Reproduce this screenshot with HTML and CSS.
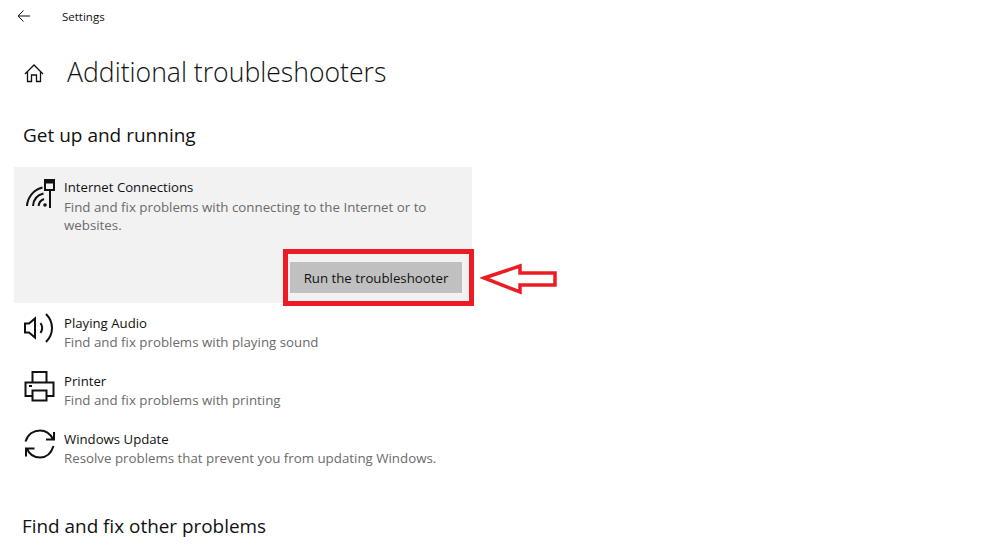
FILE: index.html
```html
<!DOCTYPE html>
<html lang="en">

<head>
    <meta charset="UTF-8">
    <title>Settings</title>
    <link rel="stylesheet" href="styles.css">
</head>

<body>
    <div class="titlebar">
        <svg class="back-icon" width="16" height="16" viewBox="0 0 16 16"><path d="M13 8H1.500M6.500 2.500 1 8l5.500 5.500" /></svg>
        <span class="app-name">Settings</span>
    </div>

    <div class="page-head">
        <svg class="home-icon" width="22" height="22" viewBox="0 0 22 22"><path d="M2 13 11 4l9 9M4.500 11V20.500H8.500V14h5v6.500h4V11" /></svg>
        <h1>Additional troubleshooters</h1>
    </div>

    <h2>Get up and running</h2>

    <div class="list">
        <div class="item selected">
            <div class="item-row">
                <svg class="item-icon" width="32" height="32" viewBox="0 0 32 32"><path d="M3 29C3.500 20 10 12.500 18.500 10.500M9 29C9.500 22 13 18 19.500 16.500M14.500 29c.5-3.500 2.500-6 5.500-7" /><circle cx="21" cy="28" r="1.800" class="dot" /><path d="M26 13V31M21 3h9v10h-9z" /><rect class="dot" x="21" y="3" width="9" height="3.500" /></svg>
                <div class="item-text">
                    <div class="item-title">Internet Connections</div>
                    <div class="item-desc">Find and fix problems with connecting to the Internet or to websites.</div>
                </div>
            </div>
            <div class="item-actions">
                <button class="run-btn">Run the troubleshooter</button>
            </div>
        </div>

        <div class="item">
            <div class="item-row">
                <svg class="item-icon" width="32" height="32" viewBox="0 0 32 32"><path d="M1 10.500h4l6-5v19l-6-5H1zM16.500 10c2 3 2 7 0 10M22 1c8 8 8 20 0 28" /></svg>
                <div class="item-text">
                    <div class="item-title">Playing Audio</div>
                    <div class="item-desc">Find and fix problems with playing sound</div>
                </div>
            </div>
        </div>

        <div class="item">
            <div class="item-row">
                <svg class="item-icon" width="32" height="32" viewBox="0 0 32 32"><path d="M8.500 11V1h14v10M8 25H1.500V11.500h28V25H23M8.500 19.500h14v10h-14zM5 15h3" /></svg>
                <div class="item-text">
                    <div class="item-title">Printer</div>
                    <div class="item-desc">Find and fix problems with printing</div>
                </div>
            </div>
        </div>

        <div class="item">
            <div class="item-row">
                <svg class="item-icon" width="32" height="32" viewBox="0 0 32 32"><path d="M1.500 12.500C4 5 10 1.500 16 1.500c5.500 0 10 3 13 8.500M30 3v7.500h-8M29.500 17C27 25 22 28.500 16 28.500c-5.500 0-10.500-3-13-8.500M2 27.500V19.500h8.500" /></svg>
                <div class="item-text">
                    <div class="item-title">Windows Update</div>
                    <div class="item-desc">Resolve problems that prevent you from updating Windows.</div>
                </div>
            </div>
        </div>
    </div>

    <h2 class="other">Find and fix other problems</h2>

    <!-- annotation drawn on top of the screenshot -->
    <div class="mark-box"></div>
    <svg class="mark-arrow" width="80" height="34" viewBox="0 0 80 34"><path d="M4 16 40 4v7h35v12H40v7z" /></svg>
</body>

</html>
```

FILE: styles.css
```css
html,
body {
    height: 100%;
}

body {
    margin: 0;
    position: relative;
    overflow: hidden;
    background-color: white;
    color: #111;
    font-family: "Open Sans", sans-serif;
}

svg path {
    fill: none;
    stroke: #111;
    stroke-width: 1.3;
}

.back-icon path {
    stroke-width: 1;
}

.titlebar {
    display: flex;
    align-items: center;
    height: 32px;
    padding-left: 17px;
}

.app-name {
    margin-left: 29px;
    font-size: 11.5px;
}

.page-head {
    display: flex;
    align-items: center;
    height: 38px;
    margin-top: 21px;
    padding-left: 23px;
}

h1 {
    margin: 0 0 0 22px;
    font-size: 26.6px;
    font-weight: 300;
}

h2 {
    margin: 29px 0 0 23px;
    height: 30px;
    font-size: 19px;
    font-weight: 400;
    line-height: 30px;
}

.list {
    margin-top: 17px;
    width: 458px;
    margin-left: 14px;
}

.item {
    height: 58px;
    padding: 0 10px;
}

.item-row {
    display: flex;
}

.item-icon {
    flex: none;
    margin-top: 10px;
    margin-right: 8px;
}

.item-icon path {
    stroke-width: 2;
}

.item .dot {
    fill: #111;
}

.item-text {
    padding-top: 11px;
}

.item-title {
    font-size: 13.2px;
    line-height: 18px;
}

.item-desc {
    font-size: 13.3px;
    line-height: 18px;
    margin-top: 1px;
    color: #6b6b6b;
}

.item.selected {
    height: 136px;
    background-color: #f2f2f2;
}

.item.selected .item-desc {
    margin-top: 2px;
}

.item-actions {
    display: flex;
    justify-content: flex-end;
    margin-top: 28px;
}

.run-btn {
    width: 172px;
    height: 31px;
    border: none;
    background-color: #c0c0c0;
    color: #111;
    font-family: "Open Sans", sans-serif;
    font-size: 13.25px;
}

h2.other {
    margin-top: 34px;
    margin-left: 22px;
    font-size: 18.9px;
}

.mark-box {
    position: absolute;
    left: 283px;
    top: 249px;
    width: 181px;
    height: 47px;
    border: 5px solid #ed1c24;
}

.mark-arrow {
    position: absolute;
    left: 480px;
    top: 262px;
}

.mark-arrow path {
    fill: white;
    stroke: #ed1c24;
    stroke-width: 3.5;
}
```
